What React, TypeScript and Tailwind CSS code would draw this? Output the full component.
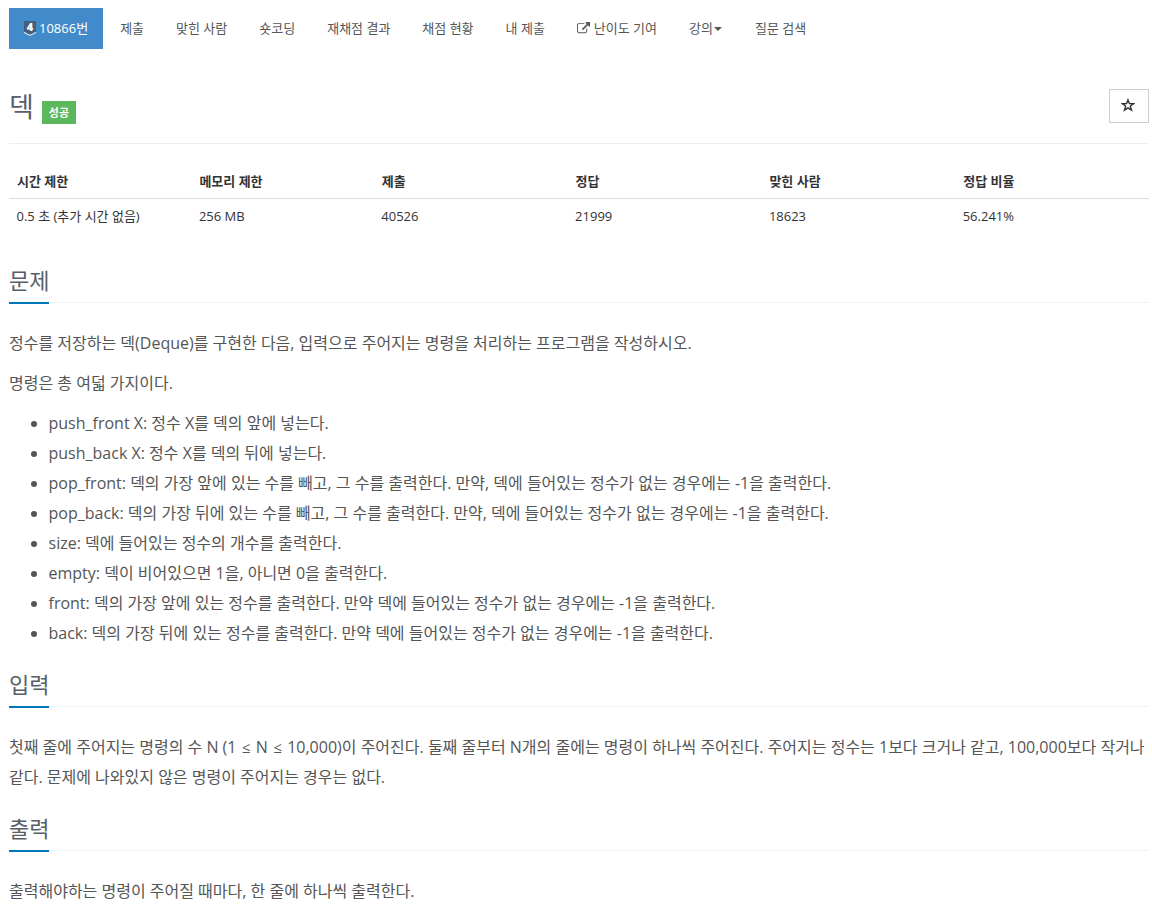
const menu = [
  { label: "제출" },
  { label: "맞힌 사람" },
  { label: "숏코딩" },
  { label: "재채점 결과" },
  { label: "채점 현황" },
  { label: "내 제출" },
  { label: "난이도 기여", icon: true },
  { label: "강의", caret: true },
  { label: "질문 검색" },
];

const info = [
  { head: "시간 제한", value: "0.5 초 (추가 시간 없음)", width: "w-[16%]" },
  { head: "메모리 제한", value: "256 MB", width: "w-[16%]" },
  { head: "제출", value: "40526", width: "w-[17%]" },
  { head: "정답", value: "21999", width: "w-[17%]" },
  { head: "맞힌 사람", value: "18623", width: "w-[17%]" },
  { head: "정답 비율", value: "56.241%", width: "w-[17%]" },
];

const commands = [
  "push_front X: 정수 X를 덱의 앞에 넣는다.",
  "push_back X: 정수 X를 덱의 뒤에 넣는다.",
  "pop_front: 덱의 가장 앞에 있는 수를 빼고, 그 수를 출력한다. 만약, 덱에 들어있는 정수가 없는 경우에는 -1을 출력한다.",
  "pop_back: 덱의 가장 뒤에 있는 수를 빼고, 그 수를 출력한다. 만약, 덱에 들어있는 정수가 없는 경우에는 -1을 출력한다.",
  "size: 덱에 들어있는 정수의 개수를 출력한다.",
  "empty: 덱이 비어있으면 1을, 아니면 0을 출력한다.",
  "front: 덱의 가장 앞에 있는 정수를 출력한다. 만약 덱에 들어있는 정수가 없는 경우에는 -1을 출력한다.",
  "back: 덱의 가장 뒤에 있는 정수를 출력한다. 만약 덱에 들어있는 정수가 없는 경우에는 -1을 출력한다.",
];

const TierBadge = () => (
  <svg width="12" height="15" viewBox="0 0 12 15" className="mr-[3px] shrink-0 overflow-visible">
    <path d="M0 0h12v10.7L6 13.7 0 10.7z" fill="#435f7a" />
    <path d="M0 10.7l6 3 6-3V12l-6 3-6-3z" fill="#d5e2ee" />
    <text x="6" y="9.8" textAnchor="middle" fontSize="11" fontWeight="800" fill="#fff">
      4
    </text>
  </svg>
);

const ExternalLink = () => (
  <svg width="13" height="13" viewBox="0 0 1792 1792" fill="currentColor" className="mr-1 shrink-0">
    <path d="M1408 928v320q0 119-84.5 203.5t-203.5 84.5h-832q-119 0-203.5-84.5t-84.5-203.5v-832q0-119 84.5-203.5t203.5-84.5h704q14 0 23 9t9 23v64q0 14-9 23t-23 9h-704q-66 0-113 47t-47 113v832q0 66 47 113t113 47h832q66 0 113-47t47-113v-320q0-14 9-23t23-9h64q14 0 23 9t9 23zm384-864v512q0 26-19 45t-45 19-45-19l-176-176-652 652q-10 10-23 10t-23-10l-114-114q-10-10-10-23t10-23l652-652-176-176q-19-19-19-45t19-45 45-19h512q26 0 45 19t19 45z" />
  </svg>
);

const Leq = () => <span className="inline-block w-[11px] text-center text-[15px] leading-none">≤</span>;

const Headline = ({ title }: { title: string }) => (
  <div className="flex h-9 border-b border-dotted border-[#e4e9f0]">
    <h2 className="box-content h-[35px] border-b-2 border-[#0076bd] text-[22px] font-normal leading-[26px] text-[#585f69]">
      {title}
    </h2>
  </div>
);

const App = () => (
  <div className="min-h-[905px] overflow-hidden bg-white pl-[9px] pr-[3px] pt-2 font-['Open_Sans','Noto_Sans_CJK_KR',sans-serif] text-[13px] text-[#333]">
    <nav className="flex h-[41px] gap-0.5 text-[#555]">
      <a className="flex items-center bg-[#428bca] px-[15px] text-white">
        <TierBadge />
        10866번
      </a>
      {menu.map((m) => (
        <a key={m.label} className="flex items-center px-[15px]">
          {m.icon && <ExternalLink />}
          {m.label}
          {m.caret && <span className="mx-px border-x-4 border-t-4 border-x-transparent border-t-[#555]" />}
        </a>
      ))}
    </nav>

    <div className="mt-[39px] flex h-[56px] justify-between border-b border-[#eee]">
      <div className="flex">
        <h1 className="text-[27px] leading-[37px] text-[#585f69]">덱</h1>
        <span className="ml-2 mt-[13px] h-[23px] bg-[#5cb85c] px-[7px] text-[11px] font-bold leading-[23px] text-white">
          성공
        </span>
      </div>
      <button className="mt-px flex h-[34px] w-10 items-center justify-center border border-[#ccc] pb-0.5 pr-0.5 text-[#333]">
        <svg width="14" height="14" viewBox="0 0 14 14" fill="none" stroke="currentColor" strokeWidth="1.4">
          <path d="M7 1.9l1.4 3.7 4.1.1-3.2 2.5 1.2 4L7 9.9l-3.5 2.3 1.2-4-3.2-2.5 4.1-.1z" />
        </svg>
      </button>
    </div>

    <table className="mt-[19px] w-full table-fixed text-left">
      <thead>
        <tr className="h-[35px] border-b border-[#ddd]">
          {info.map((c) => (
            <th key={c.head} className={`${c.width} px-2 pt-0.5 font-bold`}>{c.head}</th>
          ))}
        </tr>
      </thead>
      <tbody>
        <tr className="h-9">
          {info.map((c) => (
            <td key={c.head} className="px-[7.5px]">{c.value}</td>
          ))}
        </tr>
      </tbody>
    </table>

    <main className="mt-[33px] text-base leading-[30px] text-[#555]">
      <Headline title="문제" />
      <p className="mt-[25px]">
        정수를 저장하는 덱(Deque)를 구현한 다음, 입력으로 주어지는 명령을 처리하는 프로그램을 작성하시오.
      </p>
      <p className="mt-2.5">명령은 총 여덟 가지이다.</p>
      <ul className="mb-[23px] mt-2.5 list-disc pl-[39.5px]">
        {commands.map((c) => (
          <li key={c}>{c}</li>
        ))}
      </ul>

      <Headline title="입력" />
      <p className="mb-[23px] mt-[25px]">
        첫째 줄에 주어지는 명령의 수 N (1 <Leq /> N <Leq /> 10,000)이 주어진다. 둘째 줄부터 N개의 줄에는 명령이 하나씩 주어진다. 주어지는 정수는 1보다 크거나 같고, 100,000보다 작거나 같다. 문제에 나와있지 않은 명령이 주어지는 경우는 없다.
      </p>

      <Headline title="출력" />
      <p className="mt-[25px]">출력해야하는 명령이 주어질 때마다, 한 줄에 하나씩 출력한다.</p>
    </main>
  </div>
);

export default App;
